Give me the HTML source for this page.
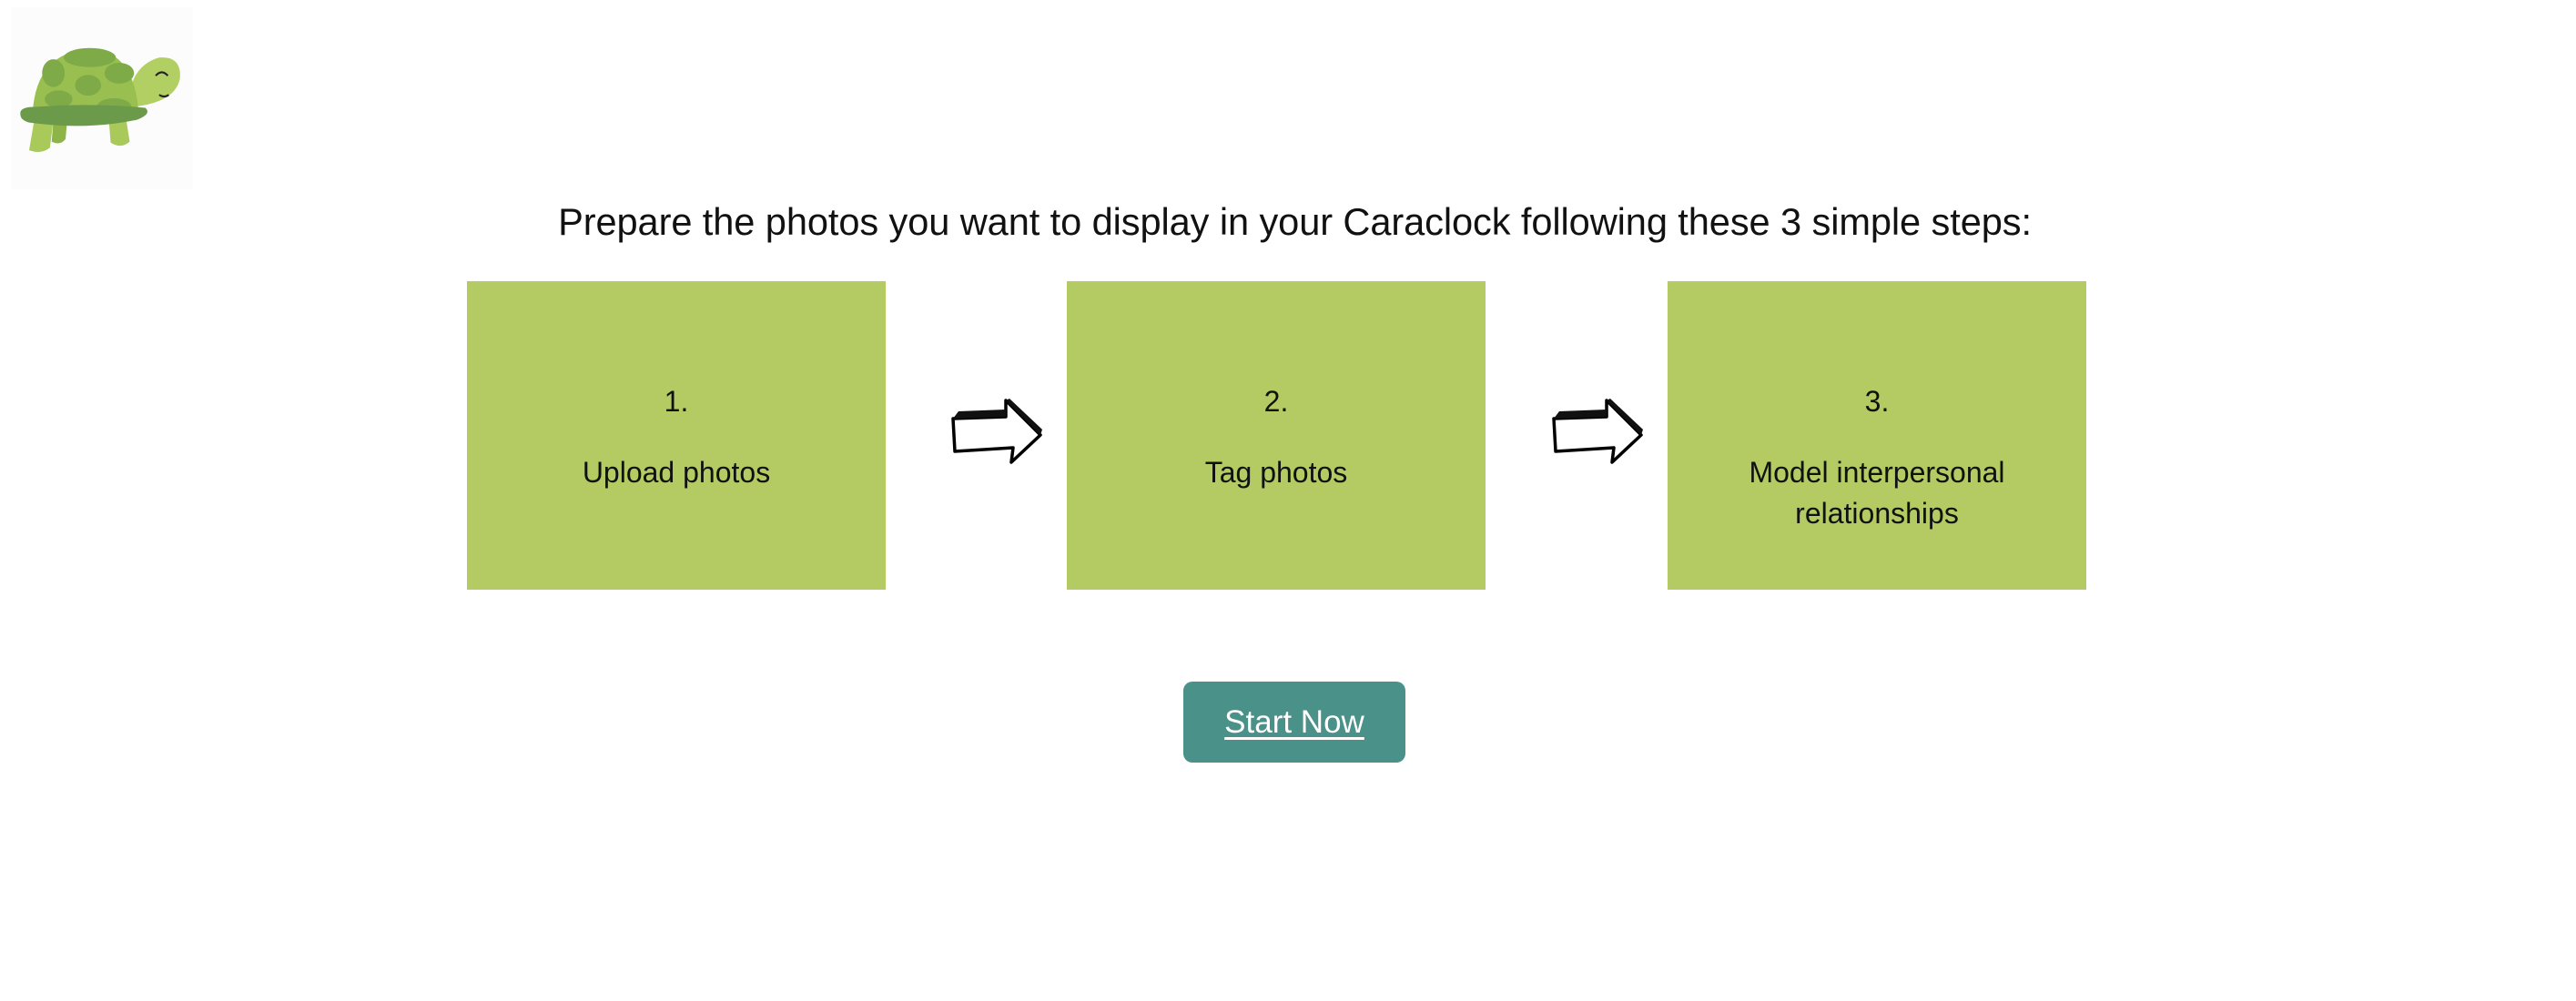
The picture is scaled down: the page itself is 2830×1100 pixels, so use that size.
<!DOCTYPE html>
<html><head><meta charset="utf-8"><style>
html,body{margin:0;padding:0;background:#fff;width:2830px;height:1100px;overflow:hidden;font-family:"Liberation Sans",sans-serif;color:#111}
.logo{position:absolute;left:12px;top:8px;width:200px;height:200px;background:#fcfcfc}
h1{position:absolute;left:0;width:2845px;top:215px;margin:0;text-align:center;font-weight:normal;font-size:41.6px;line-height:58px;letter-spacing:-0.1px}
.box{position:absolute;top:309px;width:460px;height:339px;background:#b3cb62;text-align:center;font-size:32px;line-height:45px}
.n{position:absolute;left:0;right:0;top:110px}
.t{position:absolute;left:0;right:0;top:188px}
.arrow{position:absolute;top:436px;width:104px;height:76px}
.btn{position:absolute;left:1300px;top:749px;width:244px;height:89px;background:#4a9189;border-radius:10px;color:#fff;font-size:35px;text-align:center;line-height:89px;text-decoration:underline;text-underline-offset:5px}
</style></head><body>
<div class="logo">
<svg width="200" height="200" viewBox="5 10 210 210">
<path d="M32 140 L26 175 Q40 180 50 172 L54 140Z" fill="#a9c95a"/>
<path d="M54 140 L52 165 Q62 170 68 162 L70 140Z" fill="#8db449"/>
<path d="M118 140 L120 166 Q132 174 142 165 L138 140Z" fill="#a9c95a"/>
<path d="M142 108 Q148 76 176 68 Q202 66 200 92 Q195 118 152 124Z" fill="#b2cf63"/>
<path d="M172 89 Q179 81 186 89" stroke="#222" stroke-width="2.2" fill="none"/>
<path d="M176 111 Q182 115 187 111" stroke="#222" stroke-width="2.2" fill="none"/>
<path d="M30 132 Q34 62 96 58 Q146 60 152 128Z" fill="#99bf50"/>
<ellipse cx="96" cy="68" rx="30" ry="11" fill="#7eaa47"/>
<ellipse cx="130" cy="86" rx="17" ry="12" fill="#7eaa47"/>
<ellipse cx="94" cy="100" rx="15" ry="12" fill="#7eaa47"/>
<ellipse cx="60" cy="116" rx="16" ry="10" fill="#7eaa47"/>
<ellipse cx="124" cy="125" rx="20" ry="10" fill="#7eaa47"/>
<ellipse cx="54" cy="86" rx="13" ry="16" fill="#7eaa47"/>
<path d="M16 134 Q14 125 32 125 Q100 120 160 126 Q168 133 150 140 Q90 152 26 143 Q16 140 16 134Z" fill="#6b9b4a"/>
</svg>
</div>
<h1>Prepare the photos you want to display in your Caraclock following these 3 simple steps:</h1>
<div class="box" style="left:513px"><div class="n">1.</div><div class="t">Upload photos</div></div>
<div class="box" style="left:1172px"><div class="n">2.</div><div class="t">Tag photos</div></div>
<div class="box" style="left:1832px"><div class="n">3.</div><div class="t">Model interpersonal<br>relationships</div></div>
<svg class="arrow" style="left:1043px" viewBox="0 0 104 76"><path d="M4 24 L62 22 L62 4 L100 42 L68 72 L70 56 L6 60 Z" fill="#fff" stroke="#000" stroke-width="3.5" stroke-linejoin="round"/><path d="M4 24 L10 16 L62 14 L62 22Z M62 4 L66 2 L102 36 L100 42Z" fill="#111"/></svg>
<svg class="arrow" style="left:1703px" viewBox="0 0 104 76"><path d="M4 24 L62 22 L62 4 L100 42 L68 72 L70 56 L6 60 Z" fill="#fff" stroke="#000" stroke-width="3.5" stroke-linejoin="round"/><path d="M4 24 L10 16 L62 14 L62 22Z M62 4 L66 2 L102 36 L100 42Z" fill="#111"/></svg>
<div class="btn">Start Now</div>
</body></html>
